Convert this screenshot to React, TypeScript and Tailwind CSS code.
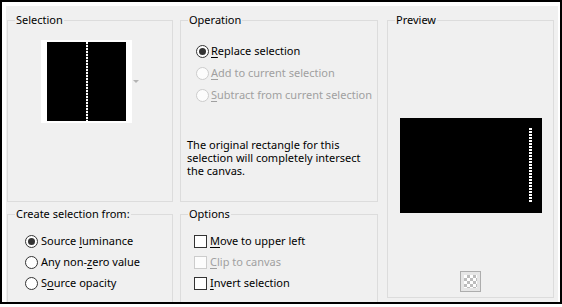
import * as React from "react"
import clsx from "clsx"

type Part = [string, string, string]

function Radio({ checked, disabled }: { checked?: boolean; disabled?: boolean }) {
  return (
    <span
      className={clsx(
        "flex h-[13px] w-[13px] shrink-0 items-center justify-center rounded-full border",
        disabled ? "border-[#cccccc] bg-[#fcfcfc]" : "border-[#333333] bg-white"
      )}
    >
      {checked && <span className="h-[7px] w-[7px] rounded-full bg-[#333333]" />}
    </span>
  )
}

function Check({ disabled }: { disabled?: boolean }) {
  return (
    <span
      className={clsx(
        "block h-[13px] w-[13px] shrink-0 border",
        disabled ? "border-[#cccccc] bg-[#fcfcfc]" : "border-[#333333] bg-white"
      )}
    />
  )
}

function Label({ parts, disabled }: { parts: Part; disabled?: boolean }) {
  return (
    <span className={clsx("whitespace-nowrap", disabled ? "text-[#a0a0a0]" : "text-black")}>
      {parts[0]}
      <span className="underline underline-offset-[2px]">{parts[1]}</span>
      {parts[2]}
    </span>
  )
}

function Group({
  title,
  className,
  children,
}: {
  title: string
  className?: string
  children?: React.ReactNode
}) {
  return (
    <fieldset className={clsx("min-w-0 border border-[#dcdcdc]", className)}>
      <legend className="ml-[7px] px-[1px] leading-[16px] text-black">{title}</legend>
      {children}
    </fieldset>
  )
}

const operations: { parts: Part; checked?: boolean; disabled?: boolean }[] = [
  { parts: ["", "R", "eplace selection"], checked: true },
  { parts: ["", "A", "dd to current selection"], disabled: true },
  { parts: ["", "S", "ubtract from current selection"], disabled: true },
]

const sources: { parts: Part; checked?: boolean }[] = [
  { parts: ["Source ", "l", "uminance"], checked: true },
  { parts: ["Any non-", "z", "ero value"] },
  { parts: ["S", "o", "urce opacity"] },
]

const options: { parts: Part; disabled?: boolean }[] = [
  { parts: ["", "M", "ove to upper left"] },
  { parts: ["", "C", "lip to canvas"], disabled: true },
  { parts: ["", "I", "nvert selection"] },
]

export default function App() {
  return (
    <div className="h-[304px] w-[562px] border-2 border-black bg-white pl-[4px] pr-[2px] pt-[4px] font-['Noto_Sans',sans-serif] text-[11px]">
      <div className="flex h-full overflow-hidden bg-[#f0f0f0] pl-[1px] pt-[6px]">
        {/* left column */}
        <div className="flex w-[166px] shrink-0 flex-col gap-[4px]">
          <Group title="Selection" className="h-[190px]">
            <div className="ml-[33px] mt-[12px] flex items-center gap-[1px]">
              <div className="bg-white px-[6px] py-[2px]">
                <div className="flex h-[79px] w-[79px] justify-center bg-black">
                  <div className="w-[2px] bg-[repeating-linear-gradient(to_bottom,#ffffff_0_2px,#2a2a2a_2px_3px)]" />
                </div>
              </div>
              <svg width="6" height="4" viewBox="0 0 6 4">
                <path d="M0 0 L6 0 L3 3 Z" fill="#b4b4b4" />
              </svg>
            </div>
          </Group>
          <Group title="Create selection from:" className="flex-1 border-b-0">
            <div className="mt-[9px] flex flex-col pl-[17px]">
              {sources.map((s) => (
                <div key={s.parts.join("")} className="flex h-[21px] items-center gap-[3px]">
                  <Radio checked={s.checked} />
                  <Label parts={s.parts} />
                </div>
              ))}
            </div>
          </Group>
        </div>

        {/* middle column */}
        <div className="ml-[7px] flex w-[198px] shrink-0 flex-col gap-[4px]">
          <Group title="Operation" className="h-[190px]">
            <div className="mt-[12px] flex flex-col pl-[15px]">
              {operations.map((o) => (
                <div key={o.parts.join("")} className="flex h-[22px] items-center gap-[2px]">
                  <Radio checked={o.checked} disabled={o.disabled} />
                  <Label parts={o.parts} disabled={o.disabled} />
                </div>
              ))}
            </div>
            <p className="mt-[32px] pl-[6px] pr-[4px] leading-[13px] text-black">
              The original rectangle for this
              <br />
              selection will completely intersect
              <br />
              the canvas.
            </p>
          </Group>
          <Group title="Options" className="flex-1 border-b-0">
            <div className="mt-[9px] flex flex-col pl-[13px]">
              {options.map((o) => (
                <div key={o.parts.join("")} className="flex h-[21px] items-center gap-[3px]">
                  <Check disabled={o.disabled} />
                  <Label parts={o.parts} disabled={o.disabled} />
                </div>
              ))}
            </div>
          </Group>
        </div>

        {/* right column */}
        <Group title="Preview" className="ml-[9px] h-[286px] w-[167px] shrink-0">
          <div className="flex flex-col items-center">
            <div className="mt-[90px] flex h-[95px] w-[142px] justify-end bg-black py-[10px] pr-[10px]">
              <div className="w-[3px] bg-[repeating-linear-gradient(to_bottom,#ffffff_0_2px,#000000_2px_3px)]" />
            </div>
            <div className="mt-[58px] h-[21px] w-[21px] border border-[#adadad] bg-[#e6e6e6] p-[3px]">
              <div className="h-full w-full bg-[repeating-conic-gradient(#bdbdbd_0_25%,#ffffff_0_50%)] bg-[length:6px_6px]" />
            </div>
          </div>
        </Group>
      </div>
    </div>
  )
}
